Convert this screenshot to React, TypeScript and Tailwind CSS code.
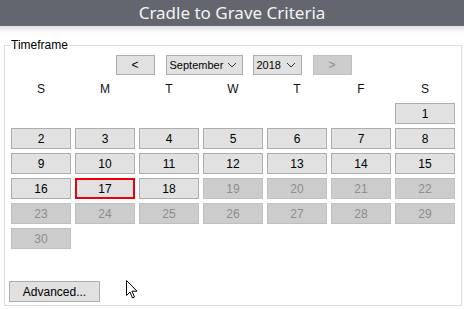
import React from 'react';

const weeks: (number | null)[][] = [
	[null, null, null, null, null, null, 1],
	[2, 3, 4, 5, 6, 7, 8],
	[9, 10, 11, 12, 13, 14, 15],
	[16, 17, 18, 19, 20, 21, 22],
	[23, 24, 25, 26, 27, 28, 29],
	[30, null, null, null, null, null, null],
];

const dayNames = ['S', 'M', 'T', 'W', 'T', 'F', 'S'];

const Chevron = () => (
	<svg width="10" height="6" viewBox="0 0 10 6" className="ml-auto">
		<path d="M1 1 L5 5 L9 1" fill="none" stroke="#333" strokeWidth="1" />
	</svg>
);

const DayButton = ({ day }: { day: number }) => {
	const disabled = day > 18;
	const selected = day === 17;
	if (selected) {
		return (
			<div className="h-[21px] flex items-center justify-center bg-[#e1e1e1] border-2 border-[#e8000b] text-black">
				{day}
			</div>
		);
	}
	return (
		<div
			className={
				disabled
					? 'h-[21px] flex items-center justify-center bg-[#cccccc] border border-[#bfbfbf] text-[#8c8c8c]'
					: 'h-[21px] flex items-center justify-center bg-[#e1e1e1] border border-[#adadad] text-black'
			}
		>
			{day}
		</div>
	);
};

export default function App() {
	return (
		<div
			className="relative w-[464px] h-[309px] bg-white overflow-hidden text-[12px]"
			style={{ fontFamily: '"Liberation Sans", Arial, sans-serif' }}
		>
			<div
				className="h-[26px] bg-[#63666e] flex items-center justify-center text-[#f4f4f4] text-[17px]"
				style={{ fontFamily: '"Noto Sans", "Open Sans", sans-serif' }}
			>
				Cradle to Grave Criteria
			</div>
			<div className="h-[7px] bg-gradient-to-b from-[#dedede] to-white" />

			<div className="relative mt-[12px] ml-[4px] w-[458px] h-[261px] border border-[#dcdcdc] pt-[9px] pl-[6px] pr-[5px]">
				<span className="absolute -top-[8px] left-[5px] bg-white px-[1px] leading-[14px] text-black">
					Timeframe
				</span>

				<div className="flex justify-center items-center">
					<div className="w-[39px] h-[20px] flex items-center justify-center bg-[#e1e1e1] border border-[#adadad]">
						&lt;
					</div>
					<div className="ml-[11px] w-[77px] h-[20px] flex items-center pl-[3px] pr-[5px] bg-[#e1e1e1] border border-[#adadad] text-[11px]">
						September
						<Chevron />
					</div>
					<div className="ml-[10px] w-[49px] h-[20px] flex items-center pl-[3px] pr-[5px] bg-[#e1e1e1] border border-[#adadad] text-[11px]">
						2018
						<Chevron />
					</div>
					<div className="ml-[11px] w-[39px] h-[20px] flex items-center justify-center bg-[#cccccc] border border-[#bfbfbf] text-[#8c8c8c]">
						&gt;
					</div>
				</div>

				<div className="grid grid-cols-7 gap-x-[4px] w-[444px] mt-[5px] h-[16px] items-center text-[#101020]">
					{dayNames.map((d, i) => (
						<div key={i} className="text-center">
							{d}
						</div>
					))}
				</div>

				<div className="grid grid-cols-7 gap-x-[4px] gap-y-[4px] w-[444px] mt-[7px]">
					{weeks.flat().map((d, i) =>
						d === null ? <div key={i} className="h-[21px]" /> : <DayButton key={i} day={d} />
					)}
				</div>

				<div className="mt-[32px] -ml-[2px] w-[91px] h-[21px] flex items-center justify-center bg-[#e1e1e1] border border-[#adadad]">
					Advanced...
				</div>
			</div>

			<svg className="absolute left-[126px] top-[280px]" width="13" height="20" viewBox="0 0 13 20">
				<path
					d="M0.5 0.5 L0.5 15.5 L4 12 L6.5 18 L8.5 17 L6 11.2 L11 11.2 Z"
					fill="white"
					stroke="black"
					strokeWidth="1"
					strokeLinejoin="miter"
				/>
			</svg>
		</div>
	);
}
